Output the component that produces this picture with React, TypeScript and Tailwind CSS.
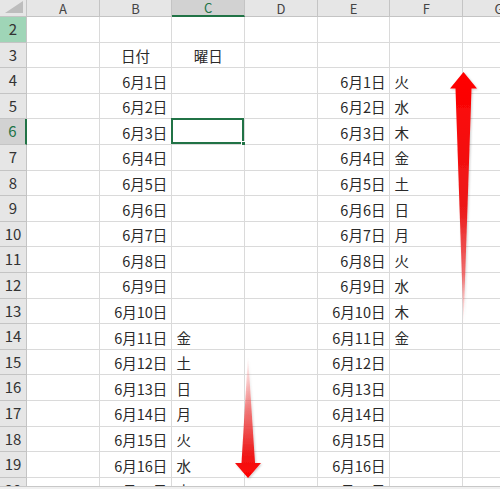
import React from "react";

const font = { fontFamily: '"Noto Sans CJK JP", "Noto Sans", sans-serif' };

const COLS = ["A", "B", "C", "D", "E", "F", "G"];
const WEEK = ["火", "水", "木", "金", "土", "日", "月"];

type Cell = { text: string; align: "left" | "right" | "center" };

// fill rows 2..20 with the sheet contents
const buildRows = () => {
  const rows: Record<number, Record<string, Cell>> = {};
  for (let r = 2; r <= 20; r++) rows[r] = {};
  rows[3].B = { text: "日付", align: "center" };
  rows[3].C = { text: "曜日", align: "center" };
  for (let d = 1; d <= 17; d++) {
    const r = d + 3;
    const date = `6月${d}日`;
    rows[r].B = { text: date, align: "right" };
    rows[r].E = { text: date, align: "right" };
    const day = WEEK[(d - 1) % 7];
    if (d >= 11) rows[r].C = { text: day, align: "left" };
    if (d <= 11) rows[r].F = { text: day, align: "left" };
  }
  return rows;
};

const rows = buildRows();
const rowNums = Array.from({ length: 19 }, (_, i) => i + 2);

function Arrows() {
  return (
    <svg className="pointer-events-none absolute left-0 top-0" width="500" height="489">
      <defs>
        <linearGradient id="upFade" x1="0" y1="72" x2="0" y2="325" gradientUnits="userSpaceOnUse">
          <stop offset="0" stopColor="#ff0000" />
          <stop offset="0.55" stopColor="#ec1a1a" />
          <stop offset="0.8" stopColor="#f04848" stopOpacity="0.75" />
          <stop offset="1" stopColor="#ff8080" stopOpacity="0" />
        </linearGradient>
        <linearGradient id="downFade" x1="0" y1="355" x2="0" y2="478" gradientUnits="userSpaceOnUse">
          <stop offset="0" stopColor="#ff8080" stopOpacity="0" />
          <stop offset="0.45" stopColor="#f04848" stopOpacity="0.7" />
          <stop offset="0.8" stopColor="#ee1c1c" />
          <stop offset="1" stopColor="#ff0000" />
        </linearGradient>
        <filter id="shade" x="-50%" y="-10%" width="200%" height="120%">
          <feDropShadow dx="1" dy="1" stdDeviation="1" floodColor="#000" floodOpacity="0.2" />
        </filter>
      </defs>
      <polygon
        points="463.5,72 477,88.5 471.5,88.5 463.5,325 455.5,88.5 450,88.5"
        fill="url(#upFade)"
        filter="url(#shade)"
      />
      <polygon
        points="248,478 261,463 255,463 248,355 241.5,463 235,463"
        fill="url(#downFade)"
        filter="url(#shade)"
      />
    </svg>
  );
}

export default function App() {
  return (
    <div className="relative h-[489px] w-[500px] overflow-hidden bg-white" style={font}>
      <div className="grid grid-cols-[27px_repeat(7,72.7px)] grid-rows-[17px_repeat(19,25.6px)]">
        <div className="relative border-b border-r border-[#c4c4c4] bg-[#e6e6e6]">
          <div className="absolute bottom-[3px] right-[3px] h-0 w-0 border-b-[12px] border-l-[18px] border-b-[#bdbdbd] border-l-transparent" />
        </div>
        {COLS.map((c) =>
          c === "C" ? (
            <div
              key={c}
              className="flex items-center justify-center border-b-2 border-r border-b-[#217346] border-r-[#c4c4c4] bg-[#d2d2d2] text-[13px] leading-[15px] text-[#217346]"
            >
              {c}
            </div>
          ) : (
            <div
              key={c}
              className="flex items-center justify-center border-b border-r border-[#c4c4c4] bg-[#e6e6e6] text-[13px] leading-[15px] text-[#444]"
            >
              {c}
            </div>
          )
        )}
        {rowNums.map((r) => (
          <React.Fragment key={r}>
            {r === 6 ? (
              <div className="flex items-center justify-center border-b border-r-2 border-b-[#c4c4c4] border-r-[#217346] bg-[#d2d2d2] text-[15px] text-[#217346]">
                {r}
              </div>
            ) : (
              <div
                className={`flex items-center justify-center border-b border-r border-[#c4c4c4] text-[15px] text-[#333] ${
                  r === 2 ? "bg-[#9fd5b7]" : "bg-[#e6e6e6]"
                }`}
              >
                {r}
              </div>
            )}
            {COLS.map((c) => {
              const cell = rows[r][c];
              const selected = r === 6 && c === "C";
              return (
                <div
                  key={c}
                  className={`relative flex items-center border-b border-r border-[#dadada] px-[4px] text-[14.5px] text-[#2a2a2a] ${
                    cell?.align === "right"
                      ? "justify-end"
                      : cell?.align === "center"
                      ? "justify-center"
                      : "justify-start"
                  }`}
                >
                  <span className="whitespace-nowrap pt-[2px]">{cell?.text}</span>
                  {selected && (
                    <div className="absolute -left-px -top-px h-[calc(100%+1px)] w-[calc(100%+1px)] border-2 border-[#217346]">
                      <div className="absolute -bottom-[4px] -right-[4px] h-[5px] w-[5px] border border-white bg-[#217346]" />
                    </div>
                  )}
                </div>
              );
            })}
          </React.Fragment>
        ))}
      </div>
      <div className="absolute bottom-0 left-0 h-[3px] w-full border-t border-[#c8c8c8] bg-[#f0f0f0]" />
      <Arrows />
    </div>
  );
}
